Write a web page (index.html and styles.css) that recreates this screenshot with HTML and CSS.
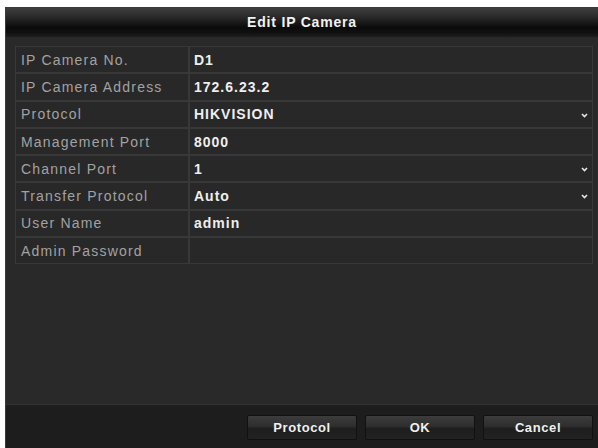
FILE: index.html
```html
<!DOCTYPE html>
<html>
<head>
<meta charset="utf-8">
<link rel="stylesheet" href="styles.css">
</head>
<body>
<div class="window">
  <div class="titlebar">Edit IP Camera</div>
  <div class="content">
    <div class="table">
      <div class="row"><div class="label">IP Camera No.</div><div class="value">D1</div></div>
      <div class="row"><div class="label">IP Camera Address</div><div class="value">172.6.23.2</div></div>
      <div class="row"><div class="label">Protocol</div><div class="value select">HIKVISION<svg class="chev" width="7" height="5" viewBox="0 0 7 5"><polyline points="1,1 3.5,3.5 6,1" fill="none" stroke="#e8e8e8" stroke-width="1.6"/></svg></div></div>
      <div class="row"><div class="label">Management Port</div><div class="value">8000</div></div>
      <div class="row"><div class="label">Channel Port</div><div class="value select">1<svg class="chev" width="7" height="5" viewBox="0 0 7 5"><polyline points="1,1 3.5,3.5 6,1" fill="none" stroke="#e8e8e8" stroke-width="1.6"/></svg></div></div>
      <div class="row"><div class="label">Transfer Protocol</div><div class="value select">Auto<svg class="chev" width="7" height="5" viewBox="0 0 7 5"><polyline points="1,1 3.5,3.5 6,1" fill="none" stroke="#e8e8e8" stroke-width="1.6"/></svg></div></div>
      <div class="row"><div class="label">User Name</div><div class="value">admin</div></div>
      <div class="row"><div class="label">Admin Password</div><div class="value"></div></div>
    </div>
  </div>
  <div class="footer">
    <button class="btn">Protocol</button>
    <button class="btn">OK</button>
    <button class="btn">Cancel</button>
  </div>
</div>
</body>
</html>
```
FILE: styles.css
```css
html, body {
  margin: 0;
  padding: 0;
  background: #ffffff;
  width: 598px;
  height: 448px;
  overflow: hidden;
}
.window {
  margin: 7px 0 0 5px;
  width: 593px;
  height: 441px;
  background: #272727;
  border-left: 1px solid #3a3a3a;
  border-top: 1px solid #3a3a3a;
  box-sizing: border-box;
  display: flex;
  flex-direction: column;
  font-family: "Liberation Sans", Arial, sans-serif;
}
.titlebar {
  height: 29px;
  flex: none;
  display: flex;
  align-items: center;
  justify-content: center;
  color: #f2f2f2;
  font-weight: bold;
  font-size: 14px;
  letter-spacing: 0.8px;
  padding-bottom: 1px;
  box-sizing: border-box;
  background: linear-gradient(to bottom, #3e3e3e 0%, #2a2a2a 30%, #0a0a0a 68%, #111111 85%, #1e1e1e 100%);
}
.content {
  flex: 1;
  padding: 9px 5px 0 9px;
  background: #292929;
}
.table {
  display: flex;
  flex-direction: column;
  gap: 2px;
  background: #383838;
  padding: 1px;
}
.row {
  display: grid;
  grid-template-columns: 172px 1fr;
  gap: 2px;
  height: 25.3px;
}
.label, .value {
  background: #282828;
  display: flex;
  align-items: center;
  font-size: 14px;
}
.label {
  padding-left: 5px;
  color: #a2a2a2;
  letter-spacing: 1.2px;
}
.value {
  padding-left: 4px;
  color: #eeeeee;
  font-weight: bold;
  letter-spacing: 1px;
  position: relative;
}
.chev {
  position: absolute;
  right: 4px;
  top: 11px;
}
.footer {
  flex: none;
  height: 44px;
  background: #1d1d1d;
  border-top: 1px solid #333333;
  display: flex;
  justify-content: flex-end;
  align-items: center;
  gap: 8px;
  padding: 2px 5px 0 0;
  box-sizing: border-box;
}
.btn {
  width: 110px;
  height: 25px;
  border: 1px solid #111111;
  border-radius: 2px;
  background: linear-gradient(to bottom, #3c3c3c 0%, #2e2e2e 45%, #1e1e1e 55%, #222222 100%);
  color: #f0f0f0;
  font-family: "Liberation Sans", Arial, sans-serif;
  font-weight: bold;
  font-size: 13px;
  letter-spacing: 0.6px;
  padding: 0;
}
```
